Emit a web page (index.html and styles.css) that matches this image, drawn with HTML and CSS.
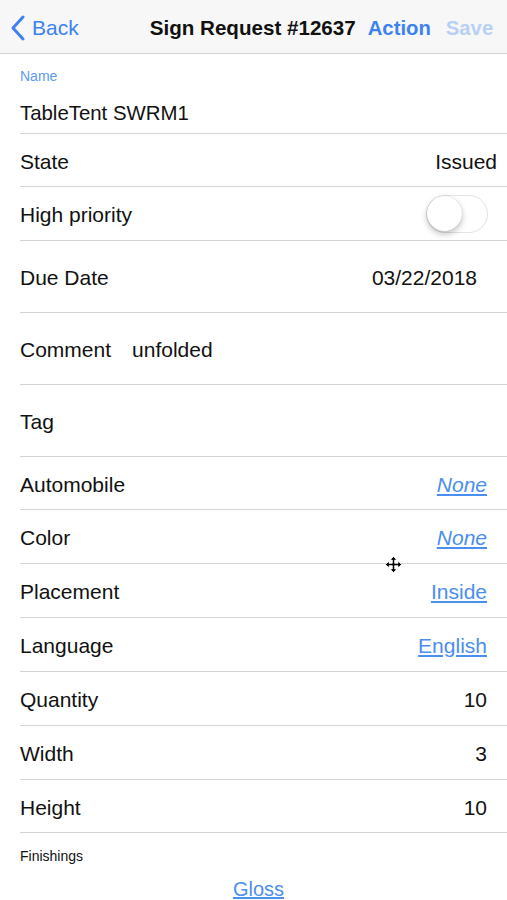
FILE: index.html
```html
<!DOCTYPE html>
<html lang="en">
  <head>
    <meta charset="UTF-8" />
    <meta name="viewport" content="width=device-width, initial-scale=1.0" />
    <title>Sign Request #12637</title>
    <link rel="stylesheet" href="styles.css">
  </head>
  <body>
    <header class="navbar">
      <a class="nav-back" href="#">
        <svg class="chevron" width="14" height="26" viewBox="0 0 14 26">
          <polyline points="12,2 2,13 12,24" fill="none" stroke="#3d82f0" stroke-width="3" stroke-linecap="round" stroke-linejoin="round" />
        </svg>
        <span>Back</span>
      </a>
      <h1 class="nav-title">Sign Request #12637</h1>
      <a class="nav-action" href="#">Action</a>
      <a class="nav-save" href="#">Save</a>
    </header>

    <main class="form">
      <div class="field-name">
        <label class="field-label">Name</label>
        <div class="field-value">TableTent SWRM1</div>
      </div>

      <div class="row row-state">
        <span class="row-label">State</span>
        <span class="row-value">Issued</span>
      </div>

      <div class="row">
        <span class="row-label">High priority</span>
        <span class="toggle"><span class="toggle-knob"></span></span>
      </div>

      <div class="row row-tall row-date">
        <span class="row-label">Due Date</span>
        <span class="row-value">03/22/2018</span>
      </div>

      <div class="row row-tall row-start">
        <span class="row-label">Comment</span>
        <span class="row-text">unfolded</span>
      </div>

      <div class="row row-tall">
        <span class="row-label">Tag</span>
      </div>

      <div class="row row-short">
        <span class="row-label">Automobile</span>
        <a class="row-link row-link-empty" href="#">None</a>
      </div>

      <div class="row">
        <span class="row-label">Color</span>
        <a class="row-link row-link-empty" href="#">None</a>
      </div>

      <div class="row">
        <span class="row-label">Placement</span>
        <a class="row-link" href="#">Inside</a>
      </div>

      <div class="row">
        <span class="row-label">Language</span>
        <a class="row-link" href="#">English</a>
      </div>

      <div class="row">
        <span class="row-label">Quantity</span>
        <span class="row-value">10</span>
      </div>

      <div class="row">
        <span class="row-label">Width</span>
        <span class="row-value">3</span>
      </div>

      <div class="row row-short">
        <span class="row-label">Height</span>
        <span class="row-value">10</span>
      </div>

      <div class="finishings">
        <div class="finishings-label">Finishings</div>
        <a class="finishings-link" href="#">Gloss</a>
      </div>
    </main>

    <svg class="move-cursor" width="17" height="17" viewBox="0 0 17 17">
      <path d="M8.5 0.5 L12 4 L9.7 4 L9.7 7.3 L13 7.3 L13 5 L16.5 8.5 L13 12 L13 9.7 L9.7 9.7 L9.7 13 L12 13 L8.5 16.5 L5 13 L7.3 13 L7.3 9.7 L4 9.7 L4 12 L0.5 8.5 L4 5 L4 7.3 L7.3 7.3 L7.3 4 L5 4 Z" fill="#000" stroke="#fff" stroke-width="0.8" />
    </svg>
  </body>
</html>
```

FILE: styles.css
```css
/* Global styles */
* {
  margin: 0;
  padding: 0;
  box-sizing: border-box;
  font-family: "Liberation Sans", Arial, sans-serif;
}

body {
  background-color: #ffffff;
  color: #111;
  width: 507px;
  position: relative;
}

a {
  text-decoration: none;
}

/* Top navigation bar */
.navbar {
  height: 54px;
  background-color: #f7f7f7;
  border-bottom: 1px solid #d2d2d2;
  display: flex;
  align-items: center;
  padding: 3px 12px 0 11px;
}

.nav-back {
  display: flex;
  align-items: center;
  gap: 7px;
  color: #3d82f0;
  font-size: 21px;
}

.chevron {
  display: block;
}

.nav-title {
  font-size: 20.6px;
  font-weight: bold;
  color: #111;
  margin-left: 71px;
}

.nav-action {
  font-size: 20.3px;
  font-weight: bold;
  color: #3d82f0;
  margin-left: 12px;
}

.nav-save {
  font-size: 20.3px;
  font-weight: bold;
  color: #b8d0f6;
  margin-left: 15px;
}

/* Form rows */
.form {
  display: flex;
  flex-direction: column;
}

.field-name {
  margin-left: 20px;
  padding-top: 14px;
  padding-bottom: 8px;
  border-bottom: 1px solid #d4d4d4;
}

.field-label {
  display: block;
  font-size: 14px;
  line-height: 16px;
  color: #5a9af2;
}

.field-value {
  margin-top: 17px;
  font-size: 20.4px;
  line-height: 24px;
}

.row {
  margin-left: 20px;
  height: 54px;
  padding: 3px 20px 0 0;
  border-bottom: 1px solid #d4d4d4;
  display: flex;
  align-items: center;
  justify-content: space-between;
  font-size: 21px;
}

.row-state {
  height: 53px;
  padding-right: 10px;
}

.row-short {
  height: 53px;
}

.row-tall {
  height: 72px;
}

.row-date {
  padding-right: 30px;
}

.row-start {
  justify-content: flex-start;
  gap: 21px;
}

.row-label,
.row-value,
.row-text {
  line-height: 24px;
}

.row-link {
  color: #4a8ef0;
  text-decoration: underline;
  line-height: 24px;
}

.row-link-empty {
  font-style: italic;
}

/* Switch */
.toggle {
  width: 62px;
  height: 38px;
  border: 1.5px solid #e3e3e3;
  border-radius: 19px;
  background: #fff;
  position: relative;
  margin: -3px -1px 0 0;
}

.toggle-knob {
  position: absolute;
  top: 0;
  left: 0;
  width: 35px;
  height: 35px;
  border-radius: 50%;
  background: #fff;
  box-shadow: 0 3px 6px rgba(0, 0, 0, 0.25), 0 0 1px rgba(0, 0, 0, 0.2);
}

/* Finishings */
.finishings {
  display: flex;
  flex-direction: column;
  align-items: center;
  padding-top: 15px;
}

.finishings-label {
  align-self: flex-start;
  margin-left: 20px;
  font-size: 14px;
  line-height: 16px;
}

.finishings-link {
  margin-top: 13px;
  font-size: 20px;
  line-height: 24px;
  color: #4a8ef0;
  text-decoration: underline;
  margin-left: 10px;
}

.move-cursor {
  position: absolute;
  left: 385px;
  top: 556px;
}
```
